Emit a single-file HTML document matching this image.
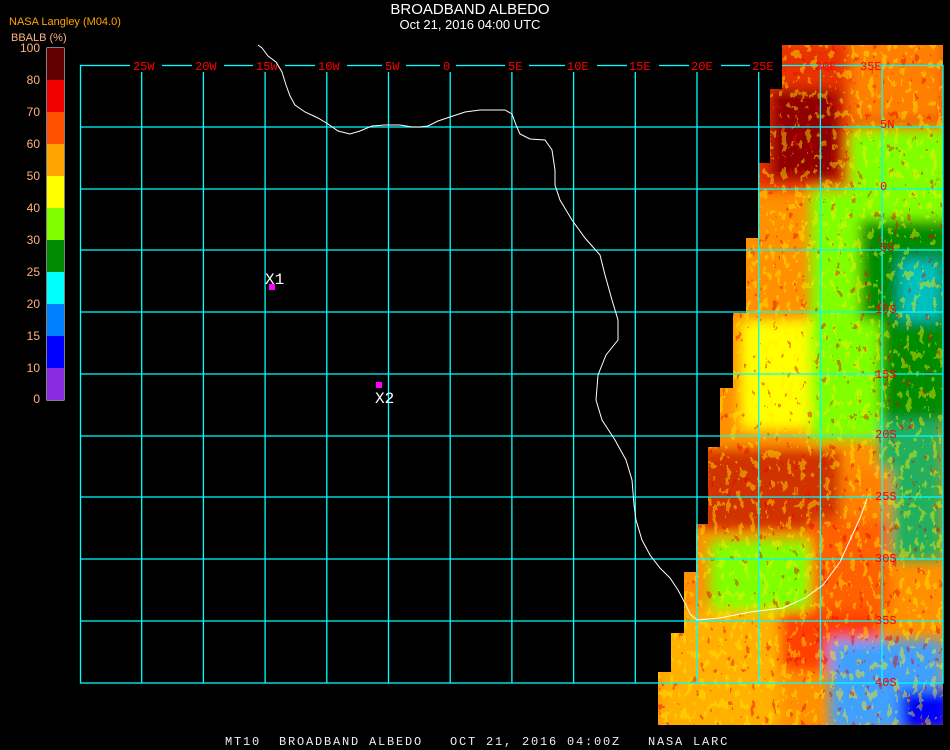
<!DOCTYPE html>
<html><head><meta charset="utf-8"><style>
html,body{margin:0;padding:0;background:#000;width:950px;height:750px;overflow:hidden;position:relative;font-family:"Liberation Sans",sans-serif}
.t{position:absolute;color:#fff;white-space:nowrap}
.lab{position:absolute;color:#ffb080;font-size:12px;width:38px;text-align:right;left:2px}
</style></head><body>
<svg width="950" height="750" style="position:absolute;left:0;top:0">
<defs>
<clipPath id="land"><polygon points="796,45 943,45 943,725 658,725 658,672 671,672 671,633 684,633 684,572 696,572 696,524 708,524 708,447 720,447 720,388 733,388 733,313 746,313 746,238 758,238 758,163 770,163 770,89 782,89 782,45"/></clipPath>
<filter id="bl" x="-20%" y="-20%" width="140%" height="140%"><feGaussianBlur stdDeviation="6"/></filter>
<filter id="n1" x="0" y="0" width="100%" height="100%">
<feTurbulence type="fractalNoise" baseFrequency="0.14 0.09" numOctaves="3" seed="3"/>
<feComponentTransfer><feFuncA type="discrete" tableValues="0 0 0 0 0 1 1"/></feComponentTransfer>
<feColorMatrix type="matrix" values="0 0 0 0 0.85 0 0 0 0 0 0 0 0 0 0 0 0 0 1 0"/>
</filter>
<filter id="n2" x="0" y="0" width="100%" height="100%">
<feTurbulence type="fractalNoise" baseFrequency="0.16 0.1" numOctaves="3" seed="11"/>
<feComponentTransfer><feFuncA type="discrete" tableValues="0 0 0 0 0 1 1 1"/></feComponentTransfer>
<feColorMatrix type="matrix" values="0 0 0 0 1 0 0 0 0 0.85 0 0 0 0 0 0 0 0 1 0"/>
</filter>
</defs>
<g clip-path="url(#land)">
<rect x="650" y="40" width="300" height="700" fill="#ff9000"/>
<g filter="url(#bl)">
<rect x="650" y="40" width="300" height="150" fill="#e83000"/>
<rect x="770" y="90" width="70" height="90" fill="#900000"/>
<rect x="850" y="40" width="93" height="80" fill="#ff8000"/>
<rect x="850" y="130" width="100" height="100" fill="#80ff00"/>
<rect x="810" y="190" width="60" height="130" fill="#80ff00"/>
<rect x="860" y="220" width="90" height="200" fill="#008c00"/>
<rect x="900" y="260" width="40" height="60" fill="#00c0c0"/>
<rect x="740" y="320" width="80" height="110" fill="#ffff00"/>
<rect x="810" y="320" width="70" height="120" fill="#80ff00"/>
<rect x="880" y="420" width="63" height="140" fill="#20b060"/>
<rect x="700" y="450" width="140" height="80" fill="#d03000"/>
<rect x="840" y="470" width="50" height="90" fill="#ff8000"/>
<rect x="710" y="540" width="100" height="70" fill="#80ff00"/>
<rect x="810" y="520" width="80" height="90" fill="#ff6000"/>
<rect x="660" y="610" width="120" height="120" fill="#ffb000"/>
<rect x="780" y="610" width="100" height="60" fill="#ff4000"/>
<rect x="830" y="640" width="113" height="90" fill="#40a0ff"/>
<rect x="900" y="690" width="50" height="40" fill="#0000ff"/>
</g>
<rect x="650" y="40" width="300" height="700" filter="url(#n2)" opacity="0.45"/>
<rect x="650" y="40" width="300" height="700" filter="url(#n1)" opacity="0.45"/>
</g>
<g stroke="#00ffff" stroke-width="1.3" fill="none">
<path d="M141.7 65V683M203.4 65V683M265.1 65V683M326.8 65V683M388.5 65V683M450.2 65V683M511.9 65V683M573.6 65V683M635.3 65V683M697 65V683M758.7 65V683M820.4 65V683M882.1 65V683"/>
<path d="M80 127H943M80 189H943M80 250H943M80 312H943M80 374H943M80 436H943M80 497H943M80 559H943M80 621H943"/>
<rect x="80.5" y="65.5" width="862.5" height="617.5"/>
</g>
<g fill="#000">
<rect x="130" y="58" width="32" height="14"/><rect x="192" y="58" width="32" height="14"/><rect x="253" y="58" width="32" height="14"/><rect x="315" y="58" width="32" height="14"/><rect x="382" y="58" width="24" height="14"/><rect x="440" y="58" width="16" height="14"/><rect x="505" y="58" width="24" height="14"/><rect x="565" y="58" width="32" height="14"/><rect x="627" y="58" width="32" height="14"/><rect x="689" y="58" width="32" height="14"/><rect x="750" y="58" width="32" height="14"/>
</g>
<g fill="#ff0000" font-family="Liberation Mono,monospace" font-size="12">
<text x="133" y="70">25W</text><text x="195" y="70">20W</text><text x="256" y="70">15W</text><text x="318" y="70">10W</text><text x="385" y="70">5W</text><text x="443" y="70">0</text><text x="508" y="70">5E</text><text x="567" y="70">10E</text><text x="629" y="70">15E</text><text x="691" y="70">20E</text><text x="752" y="70">25E</text><text x="815" y="70">30E</text><text x="860" y="70">35E</text>
<text x="880" y="128">5N</text><text x="880" y="190">0</text><text x="880" y="251">5S</text><text x="875" y="313">10S</text><text x="875" y="378">15S</text><text x="875" y="438">20S</text><text x="875" y="500">25S</text><text x="875" y="562">30S</text><text x="875" y="624">35S</text><text x="875" y="686">40S</text>
</g>
<polyline fill="none" stroke="#fff" stroke-width="1" points="258,45 262,48 268,56 276,62 282,72 286,85 290,96 295,105 305,112 318,118 328,124 338,131 350,134 360,131 372,126 385,125 400,125 412,127 420,127 428,126 438,121 450,117 465,112 480,110 505,110 512,114 516,125 520,134 530,139 545,140 552,150 555,170 555,185 560,200 572,220 585,238 600,255 605,275 612,300 618,320 618,340 606,355 598,375 596,400 602,420 615,440 626,460 632,480 634,505 636,520 642,540 650,555 660,568 670,578 678,590 686,605 690,614 697,620 720,618 750,612 783,608 805,598 823,585 840,562 850,540 860,518 867,499"/>
<rect x="269" y="284" width="6" height="6" fill="#ff00ff"/>
<rect x="376" y="382" width="6" height="6" fill="#ff00ff"/>
<text x="265" y="284" fill="#fff" font-family="Liberation Mono,monospace" font-size="16">X1</text>
<text x="375" y="403" fill="#fff" font-family="Liberation Mono,monospace" font-size="16">X2</text>
<rect x="46.5" y="47.5" width="18" height="353" fill="#fff"/>
<rect x="47" y="48" width="17" height="32" fill="#600000"/>
<rect x="47" y="80" width="17" height="32" fill="#f00000"/>
<rect x="47" y="112" width="17" height="32" fill="#ff5000"/>
<rect x="47" y="144" width="17" height="32" fill="#ffa500"/>
<rect x="47" y="176" width="17" height="32" fill="#ffff00"/>
<rect x="47" y="208" width="17" height="32" fill="#80ff00"/>
<rect x="47" y="240" width="17" height="32" fill="#008c00"/>
<rect x="47" y="272" width="17" height="32" fill="#00ffff"/>
<rect x="47" y="304" width="17" height="32" fill="#0080ff"/>
<rect x="47" y="336" width="17" height="32" fill="#0000ff"/>
<rect x="47" y="368" width="17" height="32" fill="#8a2be2"/>
</svg>
<div class="t" style="left:0;width:940px;text-align:center;top:1px;font-size:15px">BROADBAND ALBEDO</div>
<div class="t" style="left:0;width:940px;text-align:center;top:17px;font-size:13px">Oct 21, 2016 04:00 UTC</div>
<div class="t" style="left:9px;top:16px;font-size:11px;color:#ffa500">NASA Langley (M04.0)</div>
<div class="t" style="left:11px;top:32px;font-size:11px;color:#ffb080">BBALB (%)</div>
<div class="lab" style="top:41px">100</div>
<div class="lab" style="top:73px">80</div>
<div class="lab" style="top:105px">70</div>
<div class="lab" style="top:137px">60</div>
<div class="lab" style="top:169px">50</div>
<div class="lab" style="top:201px">40</div>
<div class="lab" style="top:233px">30</div>
<div class="lab" style="top:265px">25</div>
<div class="lab" style="top:297px">20</div>
<div class="lab" style="top:329px">15</div>
<div class="lab" style="top:361px">10</div>
<div class="lab" style="top:392px">0</div>
<div class="t" style="left:225px;top:735px;font-family:'Liberation Mono',monospace;font-size:12px;letter-spacing:1.8px;color:#eee">MT10&nbsp; BROADBAND ALBEDO&nbsp;&nbsp; OCT 21, 2016 04:00Z&nbsp;&nbsp; NASA LARC</div>
</body></html>
